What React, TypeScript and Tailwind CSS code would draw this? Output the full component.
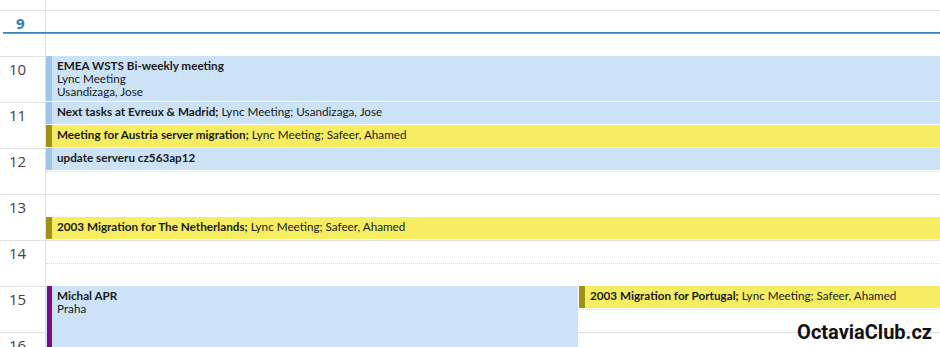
import type { ReactNode } from 'react';

type CalEvent = {
  id: string;
  start: number; // hours, e.g. 10.5
  end: number;
  left: number;
  width?: number;
  kind: 'blue' | 'yellow' | 'purple';
  content: ReactNode;
};

const HOUR_H = 46;
const TOP = 10; // y of the 9:00 line

const HOURS = [9, 10, 11, 12, 13, 14, 15, 16];

const EVENTS: CalEvent[] = [
  {
    id: 'emea',
    start: 10,
    end: 11,
    left: 0,
    kind: 'blue',
    content: (
      <>
        <div className="font-bold">EMEA WSTS Bi-weekly meeting</div>
        <div>Lync Meeting</div>
        <div>Usandizaga, Jose</div>
      </>
    ),
  },
  {
    id: 'next',
    start: 11,
    end: 11.5,
    left: 0,
    kind: 'blue',
    content: (
      <div>
        <span className="font-bold">Next tasks at Evreux &amp; Madrid;</span> Lync Meeting; Usandizaga, Jose
      </div>
    ),
  },
  {
    id: 'austria',
    start: 11.5,
    end: 12,
    left: 0,
    kind: 'yellow',
    content: (
      <div>
        <span className="font-bold">Meeting for Austria server migration;</span> Lync Meeting; Safeer, Ahamed
      </div>
    ),
  },
  {
    id: 'update',
    start: 12,
    end: 12.5,
    left: 0,
    kind: 'blue',
    content: <div className="font-bold">update serveru cz563ap12</div>,
  },
  {
    id: 'nl',
    start: 13.5,
    end: 14,
    left: 0,
    kind: 'yellow',
    content: (
      <div>
        <span className="font-bold">2003 Migration for The Netherlands;</span> Lync Meeting; Safeer, Ahamed
      </div>
    ),
  },
  {
    id: 'michal',
    start: 15,
    end: 17,
    left: 0,
    width: 532,
    kind: 'purple',
    content: (
      <>
        <div className="font-bold">Michal APR</div>
        <div>Praha</div>
      </>
    ),
  },
  {
    id: 'pt',
    start: 15,
    end: 15.5,
    left: 533,
    kind: 'yellow',
    content: (
      <div>
        <span className="font-bold">2003 Migration for Portugal;</span> Lync Meeting; Safeer, Ahamed
      </div>
    ),
  },
];

function EventBlock({ ev }: { ev: CalEvent }) {
  const bg = ev.kind === 'yellow' ? 'bg-[#f6ee60]' : 'bg-[#cce2f6]';
  const stripe =
    ev.kind === 'yellow' ? 'bg-[#9d9216]' : ev.kind === 'purple' ? 'bg-[#7b0c88]' : 'bg-[#9dc6ea]';
  return (
    <div
      className={`absolute flex ${bg}`}
      style={{
        top: (ev.start - 9) * HOUR_H + TOP,
        height: (ev.end - ev.start) * HOUR_H - 1,
        left: ev.left,
        right: ev.width ? undefined : 0,
        width: ev.width,
      }}
    >
      <div className={`shrink-0 ${stripe} ${ev.kind === 'purple' ? 'ml-px w-[5px]' : 'w-[6px]'}`} />
      <div className="overflow-hidden whitespace-nowrap pl-[5px] pt-[3px] text-[11.7px] leading-[13px] text-[#1a1a1a]">
        {ev.content}
      </div>
    </div>
  );
}

export default function App() {
  return (
    <div className="relative h-[347px] w-[940px] overflow-hidden bg-white font-['Lato',sans-serif]">
      {/* grid */}
      <div className="flex h-[10px]">
        <div className="w-[46px] border-r border-[#e1e1e1]" />
        <div className="flex-1" />
      </div>
      {HOURS.map(h => (
        <div key={h} className="flex h-[46px] border-t border-[#e1e1e1]">
          <div
            className={`w-[46px] shrink-0 border-r border-[#e1e1e1] font-['Open_Sans',sans-serif] ${
              h === 9 ? 'pl-[16px]' : 'pl-[9px]'
            }`}
          >
            <span
              className={
                h === 9
                  ? 'text-[15px] font-bold leading-[18px] text-[#2b7cc0]'
                  : 'text-[15px] leading-[18px] text-[#444]'
              }
            >
              {h}
            </span>
          </div>
          <div className="flex flex-1 flex-col">
            <div className="h-[22px]" />
            <div className="flex-1 border-t border-dotted border-[#dcdcdc]" />
          </div>
        </div>
      ))}

      {/* now line */}
      <div className="absolute left-[3px] right-0 top-[32px] h-[2px] bg-[#5ea5dc]">
        <div className="h-px bg-[#3f80b5]" />
      </div>

      {/* events */}
      <div className="absolute inset-y-0 left-[46px] right-0">
        {EVENTS.map(ev => (
          <EventBlock key={ev.id} ev={ev} />
        ))}
      </div>

      <div className="absolute bottom-[4px] right-[8px] font-['Roboto',sans-serif] text-[20px] font-bold leading-[22px] text-[#111]">
        OctaviaClub.cz
      </div>
    </div>
  );
}
